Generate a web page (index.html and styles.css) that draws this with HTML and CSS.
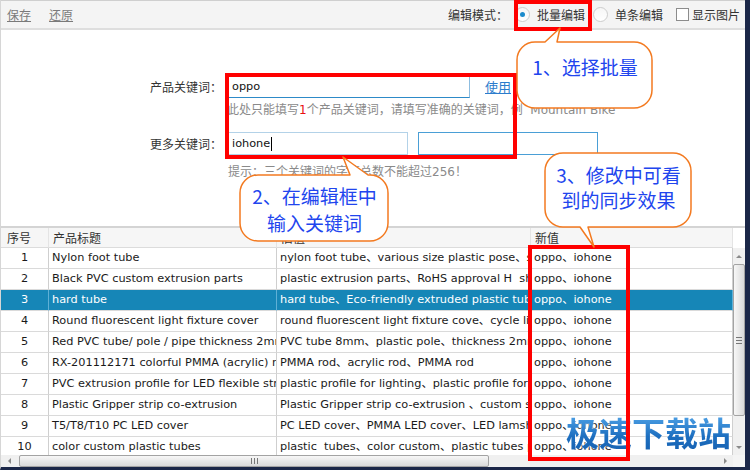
FILE: index.html
```html
<!DOCTYPE html>
<html lang="zh-CN">
<head>
<meta charset="utf-8">
<title>批量编辑</title>
<link rel="stylesheet" href="styles.css">
</head>
<body>
<div class="window">
  <div class="toolbar">
    <a class="tool-link">保存</a>
    <a class="tool-link">还原</a>
    <div class="mode">
      <span class="mode-label">编辑模式：</span>
      <span class="radio checked"></span><span class="opt opt1">批量编辑</span>
      <span class="radio"></span><span class="opt opt2">单条编辑</span>
      <span class="checkbox"></span><span class="opt">显示图片</span>
    </div>
  </div>

  <div class="form">
    <div class="row">
      <span class="label">产品关键词：</span>
      <div class="input wide focus-b">oppo</div>
      <a class="use-link">使用</a>
    </div>
    <div class="hint">此处只能填写<span class="red">1</span>个产品关键词，请填写准确的关键词，例&nbsp;&nbsp;Mountain Bike</div>
    <div class="row row2">
      <span class="label">更多关键词：</span>
      <div class="input pale">iohone<span class="caret"></span></div>
      <div class="input blue"></div>
    </div>
    <div class="hint hint2">提示：三个关键词的字符总数不能超过256！</div>
  </div>

  <div class="grid-area">
    <div class="grid-main">
      <div class="table-wrap">
        <table class="grid">
          <colgroup>
            <col class="c-no"><col class="c-title"><col class="c-old"><col class="c-new">
          </colgroup>
          <thead>
            <tr><th class="th-no">序号</th><th>产品标题</th><th>旧值</th><th>新值</th></tr>
          </thead>
          <tbody>
            <tr><td class="no">1</td><td>Nylon foot tube</td><td>nylon foot tube、various size plastic pose、soft tube</td><td>oppo、iohone</td></tr>
            <tr><td class="no">2</td><td>Black PVC custom extrusion parts</td><td>plastic extrusion parts、RoHS approval H&nbsp; shape</td><td>oppo、iohone</td></tr>
            <tr class="selected"><td class="no">3</td><td>hard tube</td><td>hard tube、Eco-friendly extruded plastic tube</td><td>oppo、iohone</td></tr>
            <tr><td class="no">4</td><td>Round fluorescent light fixture cover</td><td>round fluorescent light fixture cove、cycle light</td><td>oppo、iohone</td></tr>
            <tr><td class="no">5</td><td>Red PVC tube/ pole / pipe thickness 2mm</td><td>PVC tube 8mm、plastic pole、thickness 2mm</td><td>oppo、iohone</td></tr>
            <tr><td class="no">6</td><td>RX-201112171 colorful PMMA (acrylic) rod</td><td>PMMA rod、acrylic rod、PMMA rod</td><td>oppo、iohone</td></tr>
            <tr><td class="no">7</td><td>PVC extrusion profile for LED flexible strip</td><td>plastic profile for lighting、plastic profile for LED</td><td>oppo、iohone</td></tr>
            <tr><td class="no">8</td><td>Plastic Gripper strip co-extrusion</td><td>Plastic Gripper strip co-extrusion 、custom strip</td><td>oppo、iohone</td></tr>
            <tr><td class="no">9</td><td>T5/T8/T10 PC LED cover</td><td>PC LED cover、PMMA LED cover、LED lamshade</td><td>oppo、iohone</td></tr>
            <tr><td class="no">10</td><td>color custom plastic tubes</td><td>plastic&nbsp; tubes、color custom、plastic tubes pipe</td><td>oppo、iohone</td></tr>
          </tbody>
        </table>
      </div>
      <div class="vscroll">
        <div class="sb-btn"><span class="arr up"></span></div>
        <div class="sb-track-v">
          <div class="thumb-v"><span class="grip-v"></span></div>
        </div>
        <div class="sb-btn"><span class="arr down"></span></div>
      </div>
    </div>
    <div class="hscroll-row">
      <div class="hscroll">
        <div class="sb-btn-h"><span class="arr left"></span></div>
        <div class="sb-track-h">
          <div class="thumb-h"><span class="grip-h"></span></div>
        </div>
        <div class="sb-btn-h"><span class="arr right"></span></div>
      </div>
      <div class="corner"></div>
    </div>
  </div>

  <div class="watermark">极速下载站</div>

  <div class="redbox rb-mode"></div>
  <div class="redbox rb-input"></div>
  <div class="redbox rb-col"></div>

  <div class="callout c1">
    <svg width="140" height="84" viewBox="0 0 140 84">
      <path d="M20 16 L30 16 L45 2 L42 16 L119 16 A18 18 0 0 1 137 34 L137 64 A18 18 0 0 1 119 82 L20 82 A18 18 0 0 1 2 64 L2 34 A18 18 0 0 1 20 16 Z"/>
    </svg>
    <div class="callout-text">1、选择批量</div>
  </div>

  <div class="callout c2">
    <svg width="153" height="90" viewBox="0 0 153 90">
      <path d="M20 21 L112 21 L105 3 L130 21 L132 21 A18 18 0 0 1 150 39 L150 69 A18 18 0 0 1 132 87 L20 87 A18 18 0 0 1 2 69 L2 39 A18 18 0 0 1 20 21 Z"/>
    </svg>
    <div class="callout-text">2、在编辑框中<br>输入关键词</div>
  </div>

  <div class="callout c3">
    <svg width="151" height="98" viewBox="0 0 151 98">
      <path d="M20 2 L130 2 A18 18 0 0 1 148 20 L148 58 A18 18 0 0 1 130 76 L45 76 L51 96 L37 76 L20 76 A18 18 0 0 1 2 58 L2 20 A18 18 0 0 1 20 2 Z"/>
    </svg>
    <div class="callout-text">3、修改中可看<br>到的同步效果</div>
  </div>
</div>
</body>
</html>
```

FILE: styles.css
```css
html, body {
  margin: 0;
  padding: 0;
  background: #ffffff;
}

body {
  width: 750px;
  height: 470px;
  overflow: hidden;
  font-family: "Noto Sans CJK SC", "Noto Sans", sans-serif;
}

.window {
  position: relative;
  width: 750px;
  height: 470px;
  box-sizing: border-box;
  border-left: 1px solid #d6d6d6;
  border-right: 5px solid #1b2748;
  border-bottom: 3px solid #1b2748;
  display: flex;
  flex-direction: column;
  overflow: hidden;
  background: #ffffff;
}

/* ---------- toolbar ---------- */
.toolbar {
  flex: none;
  height: 27px;
  display: flex;
  align-items: center;
  background: #f4f4f4;
  border-top: 1px solid #cfcfcf;
  border-bottom: 2px solid #dedede;
  padding-left: 6px;
  font-size: 12px;
  line-height: 16px;
}

.tool-link {
  color: #7a7a7a;
  text-decoration: underline;
  margin-right: 18px;
}

.mode {
  margin-left: auto;
  display: flex;
  align-items: center;
  padding-right: 5px;
  color: #333333;
}

.mode-label {
  margin-right: 7px;
}

.radio {
  width: 13px;
  height: 13px;
  border: 1px solid #cdcdcd;
  border-radius: 50%;
  background: linear-gradient(#f6f6f6, #ffffff);
  display: flex;
  align-items: center;
  justify-content: center;
  margin-right: 7px;
}

.radio.checked::after {
  content: "";
  width: 5px;
  height: 5px;
  border-radius: 50%;
  background: #1c8bcc;
}

.opt1 {
  margin-right: 8px;
}

.opt2 {
  margin-right: 13px;
}

.checkbox {
  width: 11px;
  height: 11px;
  border: 1px solid #8c8c8c;
  background: #ffffff;
  margin-right: 3px;
}

/* ---------- form ---------- */
.form {
  flex: none;
  height: 151px;
  padding-top: 45px;
  font-size: 12px;
}

.row {
  display: flex;
  align-items: center;
  height: 23px;
}

.row2 {
  margin-top: 14px;
}

.label {
  width: 227px;
  box-sizing: border-box;
  padding-right: 6px;
  text-align: right;
  color: #333333;
  font-size: 12px;
}

.input {
  width: 180px;
  height: 23px;
  box-sizing: border-box;
  border: 1px solid #9cc6e4;
  padding-left: 3px;
  display: flex;
  align-items: center;
  font-family: "DejaVu Sans", "Noto Sans CJK SC", sans-serif;
  font-size: 11.3px;
  color: #111111;
  margin-right: 10px;
}

.input.wide {
  width: 242px;
  margin-right: 15px;
}

.input.focus-b {
  border-color: #8dbde0;
  border-bottom-color: #2d8ac8;
}

.input.pale {
  border-color: #b3d2e8;
}

.input.blue {
  border-color: #4a9fd6;
}

.caret {
  width: 1px;
  height: 14px;
  background: #000000;
  margin-left: 1px;
}

.use-link {
  color: #2b7ccc;
  text-decoration: underline;
  font-size: 13px;
}

.hint {
  margin-top: 4px;
  margin-left: 226px;
  height: 16px;
  line-height: 16px;
  color: #8a8a8a;
  font-size: 12px;
  white-space: nowrap;
  font-family: "DejaVu Sans", "Noto Sans CJK SC", sans-serif;
}

.hint2 {
  margin-top: 9px;
  margin-left: 227px;
}

.red {
  color: #e81010;
}

/* ---------- grid ---------- */
.grid-area {
  flex: 1;
  min-height: 0;
  display: flex;
  flex-direction: column;
  border-top: 2px solid #d4d4d4;
}

.grid-main {
  flex: 1;
  min-height: 0;
  display: flex;
}

.table-wrap {
  width: 732px;
  overflow: hidden;
}

.grid {
  table-layout: fixed;
  border-collapse: separate;
  border-spacing: 0;
  width: 732px;
}

.c-no { width: 48px; }
.c-title { width: 228px; }
.c-old { width: 254px; }
.c-new { width: 202px; }

.grid th {
  font-weight: normal;
  text-align: left;
  font-size: 12px;
  color: #333333;
  line-height: 19px;
  height: 19px;
  padding: 0 0 0 4px;
  background: #f6f6f6;
  border-right: 1px solid #e4e4e4;
  border-bottom: 1px solid #dcdcdc;
  white-space: nowrap;
  overflow: hidden;
}

.grid th.th-no {
  padding-left: 6px;
}

.grid td {
  font-family: "DejaVu Sans", "Noto Sans CJK SC", sans-serif;
  font-size: 11.3px;
  color: #1a1a1a;
  line-height: 20px;
  height: 20px;
  padding: 0 0 0 3px;
  border-right: 1px solid #cfcfcf;
  border-bottom: 1px solid #dadada;
  white-space: nowrap;
  overflow: hidden;
}

.grid td.no {
  text-align: center;
  padding: 0;
}

.grid tr.selected td {
  background: #1686b7;
  color: #ffffff;
  border-right-color: #5fb0d6;
}

/* ---------- scrollbars ---------- */
.vscroll {
  width: 12px;
  margin-top: 20px;
  background: #f0f0f0;
  display: flex;
  flex-direction: column;
}

.sb-btn {
  height: 16px;
  display: flex;
  align-items: center;
  justify-content: center;
}

.sb-track-v {
  flex: 1;
  padding-bottom: 20px;
  display: flex;
  flex-direction: column;
}

.thumb-v {
  height: 152px;
  box-sizing: border-box;
  border: 1px solid #a3a3a3;
  border-radius: 2px;
  background: linear-gradient(to right, #f7f7f7, #dadada);
  display: flex;
  align-items: center;
  justify-content: center;
}

.grip-v {
  width: 6px;
  height: 7px;
  background: repeating-linear-gradient(#777 0 1px, transparent 1px 3px);
}

.arr {
  width: 0;
  height: 0;
  border: 3px solid transparent;
}

.arr.up {
  border-bottom: 3px solid #8a8a8a;
  border-top-width: 0;
}

.arr.down {
  border-top: 3px solid #8a8a8a;
  border-bottom-width: 0;
}

.arr.left {
  border-right: 3px solid #8a8a8a;
  border-left-width: 0;
}

.arr.right {
  border-left: 3px solid #8a8a8a;
  border-right-width: 0;
}

.hscroll-row {
  flex: none;
  height: 12px;
  display: flex;
}

.hscroll {
  width: 732px;
  display: flex;
  background: #f0f0f0;
}

.sb-btn-h {
  width: 16px;
  display: flex;
  align-items: center;
  justify-content: center;
}

.sb-track-h {
  flex: 1;
  display: flex;
  padding-left: 2px;
}

.thumb-h {
  width: 470px;
  box-sizing: border-box;
  border: 1px solid #a3a3a3;
  border-radius: 2px;
  background: linear-gradient(#f7f7f7, #dadada);
  display: flex;
  align-items: center;
  justify-content: center;
}

.grip-h {
  width: 7px;
  height: 6px;
  background: repeating-linear-gradient(to right, #777 0 1px, transparent 1px 3px);
}

.corner {
  flex: 1;
  background: #f4f4f4;
}

/* ---------- overlays ---------- */
.watermark {
  position: absolute;
  left: 565px;
  top: 410px;
  font-size: 33px;
  line-height: 44px;
  font-weight: bold;
  letter-spacing: 0px;
  white-space: nowrap;
  background: linear-gradient(#5aaef0, #1d6fc0 60%, #1660b0);
  -webkit-background-clip: text;
  background-clip: text;
  color: transparent;
  filter: drop-shadow(0 0 1px #ffffff);
}

.redbox {
  position: absolute;
  box-sizing: border-box;
  border: 4px solid #ff0000;
}

.rb-mode {
  left: 513px;
  top: 0;
  width: 78px;
  height: 31px;
}

.rb-input {
  left: 224px;
  top: 73px;
  width: 292px;
  height: 86px;
}

.rb-col {
  left: 527px;
  top: 245px;
  width: 102px;
  height: 216px;
}

.callout {
  position: absolute;
}

.callout svg {
  position: absolute;
  left: 0;
  top: 0;
}

.callout path {
  fill: #ffffff;
  stroke: #f37a20;
  stroke-width: 1.5;
  stroke-linejoin: round;
}

.callout-text {
  position: relative;
  text-align: center;
  color: #2145ee;
  font-size: 19px;
  white-space: nowrap;
}

.c1 {
  left: 514px;
  top: 26px;
  width: 140px;
  height: 84px;
}

.c1 .callout-text {
  padding-top: 28px;
  line-height: 25px;
}

.c2 {
  left: 237px;
  top: 154px;
  width: 153px;
  height: 90px;
}

.c2 .callout-text {
  padding-top: 28px;
  line-height: 27px;
}

.c3 {
  left: 542px;
  top: 151px;
  width: 151px;
  height: 98px;
}

.c3 .callout-text {
  padding-top: 11px;
  line-height: 25px;
}
```
